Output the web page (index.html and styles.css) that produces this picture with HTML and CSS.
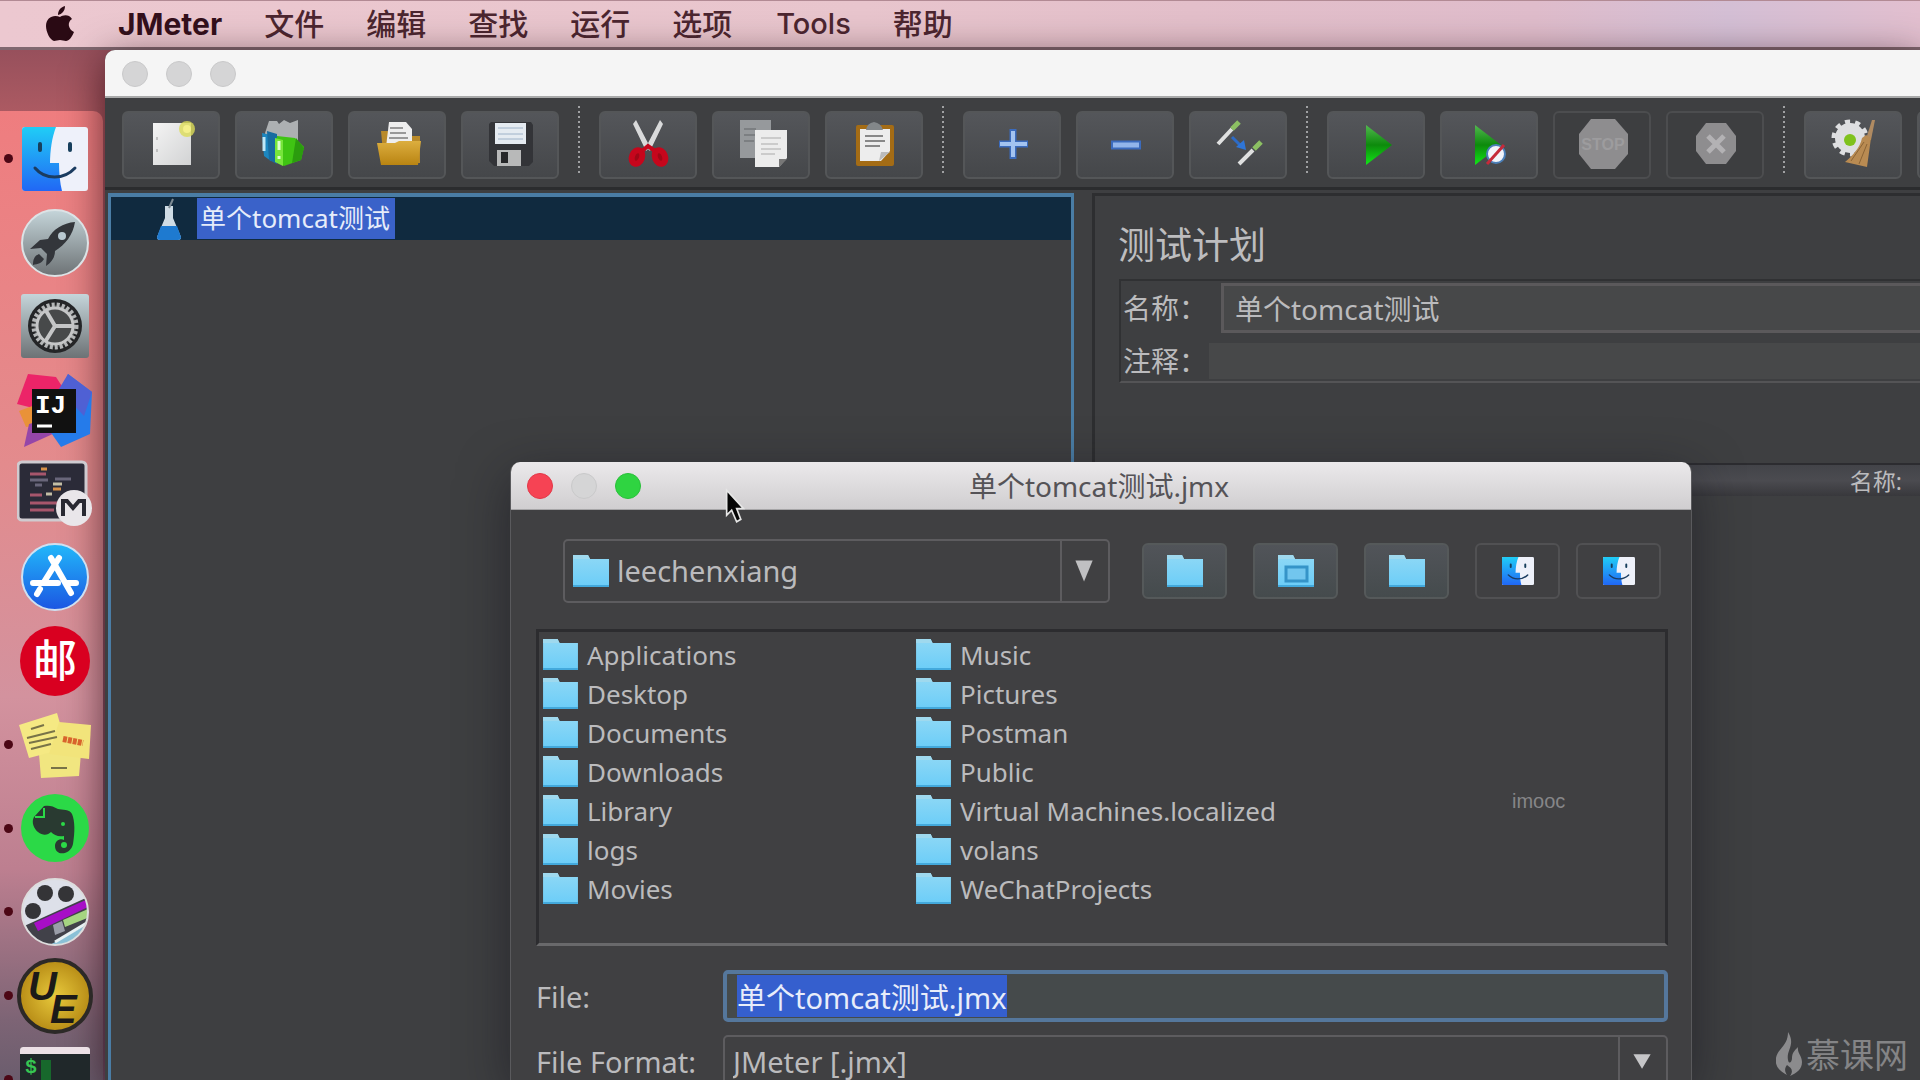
FILE: index.html
```html
<!DOCTYPE html>
<html lang="zh-CN">
<head>
<meta charset="utf-8">
<title>JMeter</title>
<link rel="stylesheet" href="styles.css">
</head>
<body>
<svg class="defs" aria-hidden="true">
  <defs>
    <linearGradient id="blue" x2="0" y2="1"><stop stop-color="#20cdf6"/><stop offset="1" stop-color="#2167f5"/></linearGradient>
    <linearGradient id="silver" x2="0" y2="1"><stop stop-color="#c5d5da"/><stop offset="1" stop-color="#6d7275"/></linearGradient>
    <linearGradient id="paper" x2="1" y2="1"><stop stop-color="#f4f4f4"/><stop offset="1" stop-color="#d2d3d4"/></linearGradient>
    <linearGradient id="gold" x2="0" y2="1"><stop stop-color="#dcae3f"/><stop offset="1" stop-color="#b98412"/></linearGradient>
    <linearGradient id="store" x2="0" y2="1"><stop stop-color="#22b8fa"/><stop offset="1" stop-color="#1b55e2"/></linearGradient>
    <linearGradient id="play" x2="0" y2="1"><stop stop-color="#52b84f"/><stop offset=".5" stop-color="#0d8a0c"/><stop offset="1" stop-color="#12e818"/></linearGradient>
    <linearGradient id="folderfill" x2="0" y2="1"><stop stop-color="#8fd8f5"/><stop offset="1" stop-color="#6bcdf8"/></linearGradient>
    <radialGradient id="brass"><stop stop-color="#e8c93c"/><stop offset="1" stop-color="#b78c16"/></radialGradient>
    <symbol id="folder" viewBox="0 0 36 32"><path d="M0 0h15l2 4h19v28H0z" fill="url(#folderfill)"/><path d="M0 0h15l2 4H0z" fill="#9fd9ee"/><path d="M0 31h36" stroke="#43a9dc" stroke-width="2"/></symbol>
    <symbol id="finder" viewBox="0 0 66 64">
      <rect width="66" height="64" rx="3" fill="#eef1fa"/>
      <path d="M3 0h31c-4 10-6 24-6 36h9c0 10 1 20 3 28H3q-3 0-3-3V3q0-3 3-3z" fill="url(#blue)"/>
      <path d="M18 17v6M48 17v6" stroke="#173f5c" stroke-width="4" stroke-linecap="round"/>
      <path d="M13 41c10 12 29 12 40 0" fill="none" stroke="#1b3c60" stroke-width="3" stroke-linecap="round"/>
    </symbol>
  </defs>
</svg>

<nav class="menubar">
  <svg class="apple" width="28" height="36" viewBox="0 0 28 36"><path d="M19 0c0 5-3 8-7 9 0-5 3-8 7-9zM14 11c3-2 9-3 12 2-5 3-4 10 2 13-2 5-5 9-8 9-2 0-4-1-6-1s-4 1-6 1c-4-1-8-9-8-15 0-9 8-12 14-9z" fill="#2a0a14"/></svg>
  <a class="appname" href="#">JMeter</a>
  <a href="#">文件</a><a href="#">编辑</a><a href="#">查找</a><a href="#">运行</a><a href="#">选项</a><a class="latin" href="#">Tools</a><a href="#">帮助</a>
</nav>

<div class="desktop">
  <aside class="dock">
    <ul>
      <li class="running"><svg width="66" height="64"><use href="#finder"/></svg></li>
      <li><svg width="70" height="70" viewBox="0 0 70 70"><circle cx="35" cy="35" r="33" fill="url(#silver)" stroke="#dce3e6" stroke-width="2"/><path d="M55 14c-12 1-22 7-27 17l-8 1-10 9 11-1 6 6-1 12c6-4 9-9 9-15 10-6 18-16 20-29zM19 46c-5 2-6 6-6 11 5-1 9-2 11-6z" fill="#33363b"/><circle cx="42" cy="28" r="4" fill="#b8c8d0"/></svg></li>
      <li><svg width="68" height="64" viewBox="0 0 68 64"><rect width="68" height="64" rx="3" fill="url(#silver)"/><circle cx="34" cy="32" r="27" fill="#242527"/><circle cx="34" cy="32" r="21" fill="#47494a" stroke="#b4b6b7" stroke-width="5" stroke-dasharray="3 2"/><circle cx="34" cy="32" r="18" fill="none" stroke="#c5c6c7" stroke-width="3"/><path d="M34 32h19M34 32L24 15M34 32L24 48" stroke="#c5c6c7" stroke-width="4"/></svg></li>
      <li><svg width="76" height="76" viewBox="0 0 76 76"><path d="M11 2l28 3 9 14-20 20-28-7z" fill="#ec2468"/><path d="M2 39l16-6 7 20-16 2z" fill="#e99238"/><path d="M12 52l18-5 8 14-31 14z" fill="#9546a8"/><path d="M51 2l24 18-2 42-29 13-14-20z" fill="#257bea"/><path d="M51 2l24 18-8 24-25-27z" fill="#4f60d4"/><rect x="15" y="17" width="44" height="44" fill="#111"/><text x="18" y="41" class="mono" font-size="26" fill="#fff">IJ</text><path d="M20 54h15" stroke="#fff" stroke-width="3"/></svg></li>
      <li><svg width="76" height="68" viewBox="0 0 76 68"><rect x="1" y="2" width="68" height="58" rx="4" fill="#2b2b38" stroke="#cfcbd0" stroke-width="3"/><g stroke-width="3"><path d="M13 14h16M13 35h12M13 43h30M13 50h24" stroke="#a7566c"/><path d="M24 9h6M36 29h8" stroke="#d79149"/><path d="M13 20h18M38 19h16M18 25h7" stroke="#69667a"/><path d="M36 24h9M29 34h6" stroke="#c3bea5"/></g><circle cx="57" cy="48" r="18" fill="#e9e6ea"/><path d="M46 56V41h4l6 7 6-7h5v15" fill="none" stroke="#292932" stroke-width="4"/></svg></li>
      <li><svg width="70" height="70" viewBox="0 0 70 70"><circle cx="35" cy="35" r="33" fill="url(#store)" stroke="#cfe0f1" stroke-width="2"/><path d="M31 16l20 35M39 16L24 40M20 47l-3 5M13 41h25M47 41h9" stroke="#fff" stroke-width="6" stroke-linecap="round"/></svg></li>
      <li><svg width="70" height="70" viewBox="0 0 70 70"><circle cx="35" cy="35" r="35" fill="#d90020"/><text x="35" y="51" text-anchor="middle" class="cjk" font-size="44" fill="#fff">邮</text></svg></li>
      <li class="running"><svg width="74" height="66" viewBox="0 0 74 66"><path d="M20 30h44l-3 34-38 2z" fill="#f1e680"/><path d="M1 13l38-12 10 35-38 10z" fill="#f5e983"/><path d="M41 10l32 3-2 34-40-5z" fill="#f2e47b"/><g fill="none"><path d="M13 17l13-4M9 26l28-7M11 31l28-6M13 37l20-5M33 56h16" stroke="#787348" stroke-width="2"/><path d="M45 27l20 4" stroke="#d8642c" stroke-width="6" stroke-dasharray="4 1"/></g></svg></li>
      <li class="running"><svg width="70" height="70" viewBox="0 0 70 70"><circle cx="35" cy="35" r="34" fill="#2bd947"/><path d="M24 13l-10 11c-3 5 0 12 4 15 5 4 10 3 13 0 3 3 7 5 13 4v4c-4-2-9 1-9 6 0 11 16 9 18-2 2-12 2-23-1-30-2-5-10-4-14-5-5-3-9-4-14-3z" fill="#293a31"/><path d="M15 24h9v-9" fill="none" stroke="#2bd947" stroke-width="2"/><circle cx="43" cy="31" r="2" fill="#2bd947"/><circle cx="44" cy="52" r="3" fill="#2bd947"/></svg></li>
      <li class="running"><svg width="70" height="70" viewBox="0 0 70 70"><clipPath id="reel"><circle cx="35" cy="35" r="33"/></clipPath><g clip-path="url(#reel)"><path d="M0 0h70v70H0z" fill="#dde0e9"/><g fill="#343437"><circle cx="25" cy="16" r="8"/><circle cx="46" cy="17" r="8"/><circle cx="13" cy="34" r="8"/></g><path d="M0 51L70 19v51H0z" fill="#414149"/><path d="M26 70l44-24v24z" fill="#8ac0d6"/><path d="M14 46L70 21v8L18 54z" fill="#a70ec7"/><path d="M43 43l27-12v9L45 50z" fill="#a5d481"/><path d="M33 48l9-4 3 10-10 4z" fill="#9a9da8"/><path d="M35 65l35-21" stroke="#e8f1f3" stroke-width="3"/></g><circle cx="35" cy="35" r="33" fill="none" stroke="#ddd" stroke-width="2"/></svg></li>
      <li class="running"><svg width="78" height="78" viewBox="0 0 78 78"><circle cx="39" cy="39" r="36" fill="url(#brass)" stroke="#2c2927" stroke-width="4"/><text class="ue" font-size="40" fill="#1c1a18"><tspan x="12" y="43">U</tspan><tspan x="34" y="66">E</tspan></text></svg></li>
      <li class="running"><svg width="70" height="64" viewBox="0 0 70 64"><rect width="70" height="64" rx="3" fill="#20282a"/><path d="M3 0h64q3 0 3 3v4H0V3q0-3 3-3z" fill="#ece0e6"/><text x="5" y="26" class="mono" font-size="20" fill="#36c552">$</text><rect x="21" y="13" width="10" height="20" fill="#17682c"/></svg></li>
    </ul>
  </aside>

  <main class="window">
    <header class="titlebar"><i></i><i></i><i></i></header>
    <div class="toolbar">
      <div class="group">
        <button aria-label="新建"><svg viewBox="0 0 98 68"><path d="M31 12h38v42H31z" fill="url(#paper)"/><path d="M35 26v3M35 38v3" stroke="#999"/><circle cx="65" cy="18" r="8" fill="#dcdc58" opacity=".8"/><circle cx="65" cy="18" r="4" fill="#f4f08a"/></svg></button>
        <button aria-label="模板"><svg viewBox="0 0 98 68"><path d="M30 22l4-12h8l2 3 5-4 6 3 8-3v24H31z" fill="#adb0b2"/><path d="M27 22l9 2v26l-7-5z" fill="#1c87c0"/><path d="M32 20l10 3v30l-8-4z" fill="#186ca0"/><path d="M29 26v14" stroke="#bfe8f7" stroke-width="3"/><path d="M42 25l18 2 9 9-3 13-17 6-9-5z" fill="#3fc413"/><path d="M40 27l8 2v26l-8-4z" fill="#77e53b"/><path d="M61 27l8 10-3 12-9 3z" fill="#2b9c0e"/><path d="M44 30v9M44 45v3" stroke="#dfffd2" stroke-width="3"/></svg></button>
        <button aria-label="打开"><svg viewBox="0 0 98 68"><path d="M33 20h9v8h21v-3h9v27H36z" fill="#b98a2a"/><path d="M41 11h17l6 7v18H38z" fill="#eee"/><path d="M42 17h13M42 22h16M41 27h19" stroke="#999" stroke-width="2"/><path d="M29 32h18l4-2h22l-3 24H33z" fill="url(#gold)"/></svg></button>
        <button aria-label="保存"><svg viewBox="0 0 98 68"><path d="M30 11h40l2 3v37l-4 4H33l-5-5V13z" fill="#333438"/><path d="M34 12h31v21H34z" fill="#e5ebf1"/><path d="M37 17h25M37 23h25M37 28h25" stroke="#9eb2c8"/><path d="M36 39h24v16H36z" fill="#b8b9b9"/><path d="M40 41h7v11h-7z" fill="#27282a"/></svg></button>
      </div>
      <span class="sep"></span>
      <div class="group">
        <button aria-label="剪切"><svg viewBox="0 0 98 68"><path d="M34 13l3-4 14 27-4 4zM64 13l-3-4-14 27 4 4z" fill="#d9dadb"/><g fill="#a00716" stroke="#c6061c" stroke-width="6"><ellipse cx="38" cy="46" rx="5" ry="7" transform="rotate(22 38 46)"/><ellipse cx="61" cy="46" rx="5" ry="7" transform="rotate(-22 61 46)"/></g><path d="M43 40l6-5 7 5" fill="none" stroke="#c6061c" stroke-width="4"/></svg></button>
        <button aria-label="复制"><svg viewBox="0 0 98 68"><path d="M28 9h31v38H28z" fill="#96999c"/><path d="M32 18h12M32 24h12M32 30h10" stroke="#7c7f82" stroke-width="2"/><path d="M43 19h32v28l-8 9H43z" fill="#ececec"/><path d="M49 27h20M49 33h17M49 38h20M49 43h14" stroke="#aaa"/><path d="M67 56v-8h8z" fill="#777"/></svg></button>
        <button aria-label="粘贴"><svg viewBox="0 0 98 68"><rect x="31" y="14" width="38" height="41" rx="2" fill="#a46c15"/><path d="M35 18h30v22l-9 10H35z" fill="#ededed"/><path d="M40 25h18M40 30h20M40 35h15" stroke="#888" stroke-width="2"/><path d="M41 19q1-7 8-8 7 1 9 8z" fill="#83878a"/><path d="M54 50l2-9h9z" fill="#bbb"/></svg></button>
      </div>
      <span class="sep"></span>
      <div class="group">
        <button aria-label="展开"><svg viewBox="0 0 98 68"><path d="M36 33h29M50 18v30" stroke="#3b6bbd" stroke-width="7"/><path d="M37 33h27M50 20v26" stroke="#a3c3f0" stroke-width="4"/></svg></button>
        <button aria-label="收起"><svg viewBox="0 0 98 68"><path d="M35 34h30" stroke="#3b6bbd" stroke-width="9"/><path d="M37 34h26" stroke="#92b5ea" stroke-width="5"/></svg></button>
        <button aria-label="切换"><svg viewBox="0 0 98 68"><path d="M29 33l14-15M50 53l14-14" stroke="#dfe0e0" stroke-width="4"/><path d="M43 18l7-7M65 38l7-7" stroke="#8cc063" stroke-width="5"/><path d="M43 26l8 8" stroke="#2d6bc6" stroke-width="3"/><path d="M57 39l-10-3 8-7z" fill="#2e75d8"/></svg></button>
      </div>
      <span class="sep"></span>
      <div class="group">
        <button aria-label="启动"><svg viewBox="0 0 98 68"><path d="M39 14l26 20-26 20z" fill="url(#play)"/></svg></button>
        <button aria-label="不停顿开始"><svg viewBox="0 0 98 68"><path d="M35 14l26 20-26 20z" fill="url(#play)"/><circle cx="56" cy="43" r="9" fill="#f2f4fa" stroke="#4b7fb8" stroke-width="2"/><path d="M47 53l17-19" stroke="#c52a3a" stroke-width="3"/></svg></button>
        <button aria-label="停止" disabled><svg viewBox="0 0 98 68"><path d="M38 8h24l13 15v20L62 58H38L26 43V23z" fill="#8e8d8f"/><text x="50" y="39" text-anchor="middle" class="stop" font-size="16" fill="#9d9c9e">STOP</text></svg></button>
        <button aria-label="关闭" disabled><svg viewBox="0 0 98 68"><path d="M40 12h20l10 13v15L60 53H40L30 40V25z" fill="#8e8d8f"/><path d="M42 25l16 16M58 25L42 41" stroke="#b3b2b4" stroke-width="5"/></svg></button>
      </div>
      <span class="sep"></span>
      <div class="group">
        <button aria-label="清除"><svg viewBox="0 0 98 68"><circle cx="46" cy="27" r="15" fill="#dedfe1"/><circle cx="46" cy="27" r="16" fill="none" stroke="#dedfe1" stroke-width="5" stroke-dasharray="5 5"/><circle cx="46" cy="29" r="6" fill="#7fc21c"/><path d="M68 9h3l-4 20-5-1z" fill="#b08b62"/><path d="M62 24l5 3-4 29-22-5c7-6 15-14 17-24z" fill="#b98b52"/><path d="M60 31L47 50M63 33l-8 20" stroke="#8b6435" stroke-width="1"/></svg></button>
        <button aria-label="清除全部"></button>
      </div>
    </div>
    <div class="split">
      <section class="tree">
        <div class="node">
          <svg width="26" height="42" viewBox="0 0 26 42"><path d="M9 8h8v12l8 19q0 3-3 3H4q-3 0-3-3l8-19z" fill="#cfdce5"/><path d="M5 28h16l4 11q0 3-3 3H4q-3 0-3-3z" fill="#1e7ad0"/><path d="M13 10l4-9" stroke="#7e8b94" stroke-width="2"/></svg>
          <span>单个tomcat测试</span>
        </div>
      </section>
      <section class="plan">
        <h1>测试计划</h1>
        <div class="fields">
          <div class="line"><label for="name">名称：</label><input id="name" type="text" value="单个tomcat测试"></div>
          <div class="line note"><label for="note">注释：</label><input id="note" type="text"></div>
        </div>
        <div class="vars">名称:</div>
      </section>
    </div>
  </main>
</div>

<div class="dialog" role="dialog" aria-labelledby="dlg">
  <header class="dlgbar"><div class="lights"><i class="red"></i><i></i><i class="green"></i></div><h2 id="dlg">单个tomcat测试.jmx</h2></header>
  <div class="places">
    <div class="combo"><svg width="36" height="32"><use href="#folder"/></svg><select aria-label="目录"><option>leechenxiang</option></select><svg class="arrow" width="48" height="24" viewBox="0 0 48 24"><path d="M14 1h18l-9 22z" fill="#c0c0c2"/></svg></div>
    <button aria-label="上一级"><svg width="36" height="32"><use href="#folder"/></svg></button>
    <button aria-label="主目录"><svg width="36" height="32" viewBox="0 0 36 32"><use href="#folder"/><path d="M8 12h21v14H8z" fill="#72c6ee" stroke="#3594c8" stroke-width="3"/></svg></button>
    <button aria-label="新建文件夹"><svg width="36" height="32"><use href="#folder"/></svg></button>
    <button class="flat" aria-label="列表"><svg width="32" height="28" viewBox="0 0 66 64" preserveAspectRatio="none"><use href="#finder"/></svg></button>
    <button class="flat last" aria-label="详细信息"><svg width="32" height="28" viewBox="0 0 66 64" preserveAspectRatio="none"><use href="#finder"/></svg></button>
  </div>
  <ul class="files">
    <li><svg><use href="#folder"/></svg>Applications</li>
    <li><svg><use href="#folder"/></svg>Desktop</li>
    <li><svg><use href="#folder"/></svg>Documents</li>
    <li><svg><use href="#folder"/></svg>Downloads</li>
    <li><svg><use href="#folder"/></svg>Library</li>
    <li><svg><use href="#folder"/></svg>logs</li>
    <li><svg><use href="#folder"/></svg>Movies</li>
    <li><svg><use href="#folder"/></svg>Music</li>
    <li><svg><use href="#folder"/></svg>Pictures</li>
    <li><svg><use href="#folder"/></svg>Postman</li>
    <li><svg><use href="#folder"/></svg>Public</li>
    <li><svg><use href="#folder"/></svg>Virtual Machines.localized</li>
    <li><svg><use href="#folder"/></svg>volans</li>
    <li><svg><use href="#folder"/></svg>WeChatProjects</li>
  </ul>
  <div class="form">
    <label for="file">File:</label>
    <input id="file" type="text" value="单个tomcat测试.jmx">
    <label for="format">File Format:</label>
    <div class="combo"><select id="format"><option>JMeter [.jmx]</option></select><svg class="arrow" width="48" height="16" viewBox="0 0 48 16"><path d="M14 1h18l-9 15z" fill="#c6c6c8"/></svg></div>
  </div>
</div>

<svg class="cursor" width="20" height="36" viewBox="0 0 24 42"><path d="M2 2v30l6-6 6 14 5-3-5-13h8z" fill="#050505" stroke="#e6e6e6" stroke-width="2"/></svg>
<span class="imooc">imooc</span>
<div class="brand"><svg width="26" height="44" viewBox="0 0 26 44"><path d="M12 0c8 13-2 18 0 28 1 5 4 2 4-2 0-5 3-8 6-11-1 6 4 9 4 15 0 7-5 11-12 14 4-6 1-8-3-11-3 4-2 7 0 10C-2 37-3 26 4 18c5-6 8-10 8-18z" fill="#8b8b8d"/></svg>慕课网</div>
<script src="script.js"></script>
</body>
</html>
```
FILE: styles.css
```css
* { box-sizing: border-box; }
body {
  margin: 0;
  height: 100vh;
  overflow: hidden;
  display: flex;
  flex-direction: column;
  background: linear-gradient(180deg, #97505c 50px, #ac5a62 112px, #684a60 100%);
  font-family: "Noto Sans", "Noto Sans CJK SC", sans-serif;
  font-size: 29px;
  color: #bbbbbd;
}
ul, h1, h2 { margin: 0; padding: 0; font-weight: 400; list-style: none; }
svg { display: block; flex: none; }
.defs { position: absolute; width: 0; height: 0; }
button, input, select { font: inherit; color: inherit; margin: 0; }
.mono { font-family: "Liberation Mono", monospace; font-weight: 700; }
.cjk { font-family: "Noto Sans CJK SC", sans-serif; font-weight: 500; }
.ue, .stop { font-family: "Liberation Sans", sans-serif; font-weight: 700; }
.ue { font-style: italic; }

.menubar {
  flex: none;
  display: flex;
  align-items: center;
  gap: 42px;
  height: 50px;
  padding-left: 46px;
  border-top: 1px solid #b28a94;
  border-bottom: 3px solid #806870;
  background: linear-gradient(90deg, #ecc8d0, #e8c5cd 45%, #e3bfca 62%, #dfbccb 80%, #d4bfd5 90%, #e2bfcf);
  font: 500 30px/46px Inter, "Noto Sans CJK SC", sans-serif;
}
.menubar a { color: #4c2630; text-decoration: none; }
.menubar .latin { font-size: 29px; margin-left: 2px; }
.menubar .appname { color: #34101c; font-weight: 700; }
.apple { margin-right: 2px; }

.desktop { flex: 1; min-height: 0; display: flex; gap: 2px; }
.dock {
  flex: none;
  width: 103px;
  margin: 61px 0 -41px;
  padding-top: 6px;
  border-radius: 0 10px 0 0;
  background: linear-gradient(180deg, #ef7d7f, #e38b8d 35%, #d3929e 58%, #bd7f90 75%, #7d6475 90%, #5e5868);
}
.dock ul { height: 100%; display: flex; flex-direction: column; }
.dock li { flex: 1; min-height: 0; position: relative; display: flex; align-items: center; justify-content: center; padding-left: 6px; }
.running::before { content: ""; position: absolute; left: 4px; width: 9px; height: 9px; border-radius: 50%; background: #4c0715; }

.window { flex: 1; min-width: 0; display: flex; flex-direction: column; border-radius: 10px 0 0 0; overflow: hidden; background: #3e3f41; box-shadow: 0 10px 40px rgba(30, 0, 10, .7); }
.titlebar { flex: none; height: 48px; display: flex; align-items: center; gap: 18px; padding: 2px 0 0 17px; background: #f5f5f5; border-bottom: 2px solid #a9aaaa; }
i { width: 26px; height: 26px; border-radius: 50%; background: #d5d5d6; border: 1px solid #c9c9ca; }
.red { background: #f64354; border-color: #e33747; }
.green { background: #2fd441; border-color: #28c039; }

.toolbar { flex: none; display: flex; height: 92px; padding: 13px 0 0 17px; border-bottom: 3px solid #2b2c2e; }
.group { flex: none; display: flex; gap: 15px; }
.toolbar button { width: 98px; height: 68px; padding: 0; border: 2px solid #545658; border-radius: 6px; background: linear-gradient(#54565a, #45474a); }
.toolbar button:disabled { background: #3d3e40; border-color: #4c4d4f; }
.toolbar svg { width: 98px; height: 68px; margin: -2px; }
.sep { flex: none; width: 40px; height: 70px; margin-top: -5px; background: repeating-linear-gradient(#a0a1a3 0 2px, transparent 2px 5px) 19px 0 / 2px 100% no-repeat; }

.split { flex: 1; min-height: 0; display: grid; grid-template-columns: 969fr 828fr; column-gap: 18px; }
.tree { margin-left: 3px; margin-top: 3px; border: 3px solid #4a7da5; border-top-width: 4px; border-bottom: 0; }
.node { display: flex; align-items: center; height: 43px; padding-left: 45px; gap: 15px; background: #102a3f; font-size: 26px; }
.node span { padding: 0 5px 0 3px; line-height: 41px; background: #3a62c9; color: #e6ecfa; }
.plan { margin-top: 3px; padding-top: 25px; border-left: 3px solid #2d2e30; border-top: 3px solid #2d2e30; }
.plan h1 { padding-left: 23px; font-size: 37px; line-height: 48px; color: #bdbdbf; }
.fields { margin: 10px 0 0 24px; padding: 2px 0 0 2px; height: 104px; border: 2px solid #303133; border-right: 0; border-bottom-color: #545456; font-size: 28px; }
.line { display: flex; align-items: center; }
.line label { flex: none; width: 98px; line-height: 50px; }
.line input { flex: 1; min-width: 0; height: 50px; padding: 0 11px; border: 3px solid #5b595b; border-right: 0; background: #474849; outline: 0; }
.note { margin-top: 3px; }
.note label { width: 86px; }
.note input { height: 36px; border: 0; }
.vars { margin-top: 80px; padding-right: 18px; height: 33px; text-align: right; font-size: 23px; line-height: 32px; border-top: 2px solid #2c2c30; background: linear-gradient(#434449, #4b4b50 50%, #38383c); }

/* Save dialog, floating on the desktop */
.dialog { position: absolute; left: 510px; top: 462px; bottom: 0; width: 1182px; border: 1px solid #5a5a5d; border-width: 0 1px; border-radius: 10px 10px 0 0; overflow: hidden; background: #404042; box-shadow: 0 14px 50px rgba(20, 20, 28, .55); }
.dlgbar { display: grid; grid-template-columns: 1fr auto 1fr; align-items: center; height: 48px; padding-right: 4px; background: linear-gradient(#ebe9eb, #d0ced0); border-bottom: 1px solid #a6a5a7; }
.lights { display: flex; gap: 18px; padding-left: 16px; }
.dlgbar h2 { font-size: 28px; line-height: 46px; color: #555357; }
.places { display: flex; align-items: center; gap: 26px; height: 119px; padding: 2px 30px 0 52px; }
.combo { display: flex; align-items: center; border: 2px solid #5d5c5f; border-radius: 5px; }
.combo select { flex: 1; min-width: 0; height: 100%; padding: 0 8px; border: 0; appearance: none; background: none; outline: 0; }
.arrow { align-self: stretch; height: auto; border-left: 2px solid #5d5c5f; }
.places .combo { flex: 1; height: 64px; padding-left: 8px; margin-right: 6px; }
.places button { flex: none; width: 85px; height: 56px; display: flex; align-items: center; justify-content: center; padding: 0; border: 2px solid #55595a; border-radius: 6px; background: linear-gradient(#515459, #454b4d); }
.places .flat { background: none; border-color: #515153; }
.places .last { margin-left: -10px; }
.files { display: grid; grid-template: repeat(7, 39px) / 373px 1fr; grid-auto-flow: column; height: 317px; margin: 0 23px 0 25px; padding: 4px; border: 3px solid #2c2c2f; border-bottom-color: #69696b; font-size: 26px; line-height: 39px; }
.files li { display: flex; align-items: center; gap: 9px; }
.files svg { width: 35px; height: 31px; margin-top: -3px; }
.form { display: grid; grid-template: 52px 52px / 187px 1fr; row-gap: 13px; align-items: center; margin: 24px 23px 0 25px; }
.form input { height: 52px; min-width: 0; padding: 0 10px; border: 4px solid #55779c; border-radius: 5px; background: #454a4b; outline: 0; }
.form input::selection { background: #355fce; color: #e8edfa; }
.form .combo { height: 52px; }

.cursor { position: absolute; left: 725px; top: 488px; }
.imooc { position: absolute; left: 1512px; top: 789px; font: 20px/24px "Liberation Sans", sans-serif; color: #868688; }
.brand { position: absolute; right: 12px; bottom: 4px; display: flex; align-items: center; gap: 4px; font: 34px/44px "Noto Sans CJK SC", sans-serif; color: #848486; }
```
FILE: script.js
```js
const file = document.getElementById("file");
file.focus({ preventScroll: true });
file.select();
```
